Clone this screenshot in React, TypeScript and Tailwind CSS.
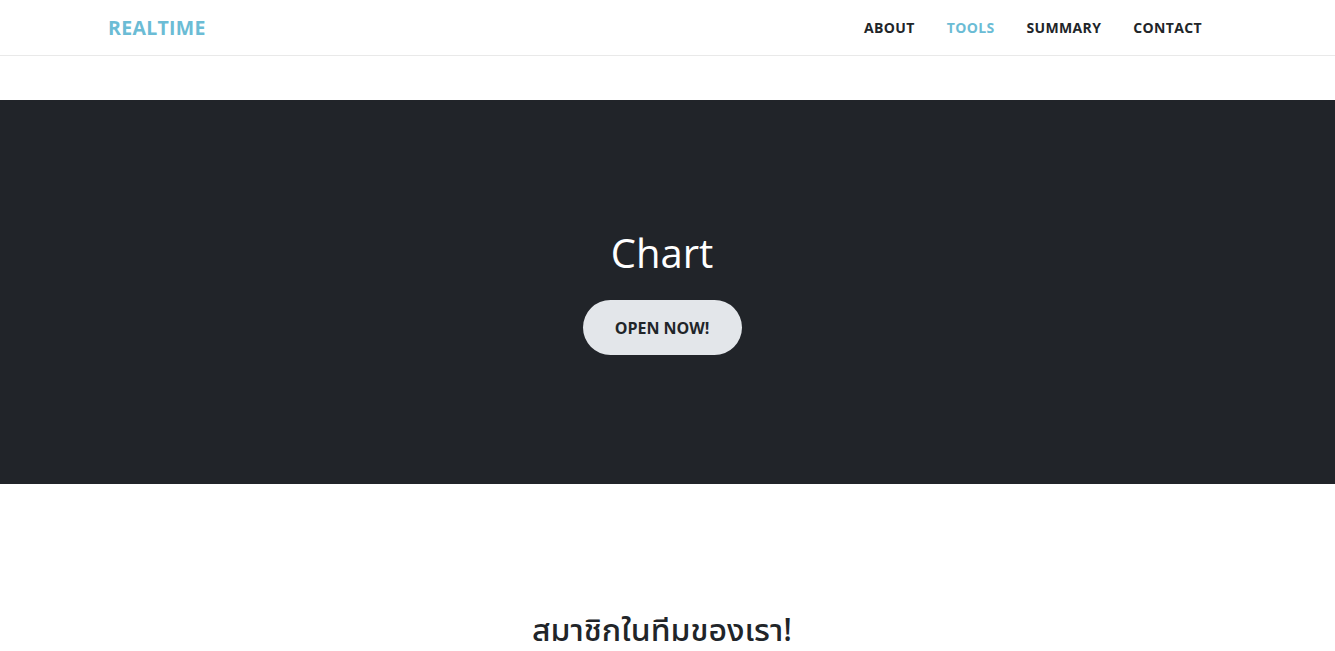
const navLinks = [
  { label: 'ABOUT', active: false },
  { label: 'TOOLS', active: true },
  { label: 'SUMMARY', active: false },
  { label: 'CONTACT', active: false },
]

const App = () => (
  <div className="min-h-screen bg-white font-['Open_Sans','Noto_Sans','Noto_Sans_Thai',sans-serif] text-[#212529]">
    <nav className="h-[56px] border-b border-[#e9e9e9] bg-white">
      <div className="ml-[108px] flex h-full w-[1110px] items-center justify-between">
        <a href="#" className="pt-px text-[19.5px] font-bold tracking-[0.3px] text-[#6bbcd5]">
          REALTIME
        </a>
        <ul className="flex items-center">
          {navLinks.map((link) => (
            <li key={link.label}>
              <a
                href="#"
                className={
                  link.active
                    ? 'block px-4 text-[14px] font-bold tracking-[0.35px] text-[#6bbcd5]'
                    : 'block px-4 text-[14px] font-bold tracking-[0.35px] text-[#212529]'
                }
              >
                {link.label}
              </a>
            </li>
          ))}
        </ul>
      </div>
    </nav>

    <section className="mt-[44px] h-[384px] bg-[#212429]">
      <div className="ml-[107px] flex h-full w-[1110px] flex-col items-center justify-center">
        <h1 className="mb-[24px] text-[40px] leading-[46px] font-normal text-white">Chart</h1>
        <a
          href="#"
          className="flex h-[55px] w-[159px] items-center justify-center rounded-full bg-[#e3e6ea] pt-px text-[16px] font-bold text-[#212529]"
        >
          OPEN NOW!
        </a>
      </div>
    </section>

    <section className="pt-[126px] pb-16">
      <div className="ml-[107px] w-[1110px] text-center">
        <h2 className="font-['Noto_Sans_Thai_UI','Noto_Sans_Thai','Open_Sans',sans-serif] text-[32px] leading-[38px] font-medium text-[#212529]">
          สมาชิกในทีมของเรา!
        </h2>
      </div>
    </section>
  </div>
)

export default App
